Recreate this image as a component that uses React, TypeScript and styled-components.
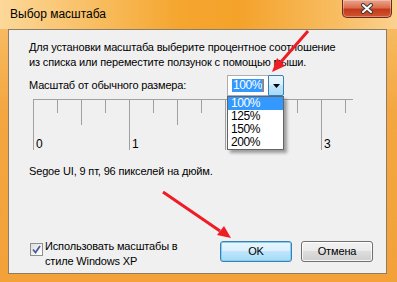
import React from "react";
import styled, { createGlobalStyle } from "styled-components";

const GlobalStyle = createGlobalStyle`
  html, body {
    margin: 0;
    padding: 0;
    background: #f4a843;
  }
  body {
    font-family: "Liberation Sans", Arial, sans-serif;
  }
`;

const Window = styled.div`
  position: relative;
  width: 397px;
  height: 282px;
  display: flex;
  flex-direction: column;
  background: linear-gradient(180deg, #f8c16c 0%, #f4a640 40%, #f3a23a 100%);
  overflow: hidden;
`;

const TitleBar = styled.div`
  height: 29px;
  flex-shrink: 0;
  display: flex;
  align-items: flex-start;
  background: linear-gradient(
    90deg,
    #fcd899 0%,
    #f9c46f 18%,
    #f5a62f 45%,
    #f4a22a 60%,
    #f8bd62 85%,
    #fbd190 100%
  );
`;

const Title = styled.span`
  margin: 7px 0 0 10px;
  font-size: 12px;
  line-height: 15px;
  color: #000;
`;

const CloseButton = styled.div`
  margin-left: auto;
  margin-right: 5px;
  width: 48px;
  height: 17px;
  border: 1px solid #6b2a1a;
  border-top: none;
  border-radius: 0 0 5px 5px;
  background: linear-gradient(180deg, #eba58e 0%, #dc6d4d 45%, #c2391c 55%, #d3552f 100%);
  box-shadow: inset 0 0 0 1px rgba(255, 255, 255, 0.3);
  display: flex;
  align-items: center;
  justify-content: center;
`;

const FrameBody = styled.div`
  flex: 1;
  display: flex;
  padding: 0 10px 8px 8px;
`;

const Client = styled.div`
  flex: 1;
  display: flex;
  flex-direction: column;
  background: #f0f0f0;
  border: 1px solid #8e7d66;
  color: #000;
  font-size: 11px;
  letter-spacing: -0.15px;
  line-height: 15px;
`;

const Intro = styled.p`
  margin: 10px 0 0;
  padding: 0 20px;
  white-space: nowrap;
`;

const ScaleRow = styled.div`
  margin-top: 5px;
  padding-left: 20px;
  height: 21px;
  display: flex;
  align-items: center;
  position: relative;
  z-index: 2;
`;

const ScaleLabel = styled.span`
  width: 198px;
`;

const Combo = styled.div`
  position: relative;
  display: flex;
  height: 21px;
  letter-spacing: -0.4px;
`;

const ComboInput = styled.div`
  width: 36px;
  height: 19px;
  border: 1px solid #abadb3;
  border-right: none;
  background: #fff;
  display: flex;
  align-items: center;
  padding-left: 4px;
`;

const Selection = styled.span`
  background: #3399ff;
  color: #fff;
  font-size: 12px;
  line-height: 13px;
  padding: 0 1px;
  display: flex;
  align-items: center;
`;

const Caret = styled.span`
  width: 1px;
  height: 13px;
  background: #e07a1a;
`;

const ComboButton = styled.div`
  width: 14px;
  height: 19px;
  border: 1px solid #3c7fb1;
  border-radius: 0 2px 2px 0;
  background: linear-gradient(180deg, #eaf6fd 0%, #d9f0fc 50%, #bee6fd 50%, #a7d9f5 100%);
  display: flex;
  align-items: center;
  justify-content: center;
`;

const DropList = styled.ul`
  position: absolute;
  top: 21px;
  left: 0;
  width: 55px;
  margin: 0;
  padding: 0;
  list-style: none;
  background: #fff;
  border: 1px solid #646464;
  box-shadow: 3px 3px 3px rgba(0, 0, 0, 0.35);
`;

const DropItem = styled.li<{ $active?: boolean }>`
  height: 13px;
  line-height: 13px;
  padding-left: 3px;
  font-size: 12px;
  background: ${(p) => (p.$active ? "#3399ff" : "transparent")};
  color: ${(p) => (p.$active ? "#fff" : "#000")};
`;

const RulerBox = styled.div`
  margin: 3px 0 0 24px;
  height: 53px;
`;

const FontInfo = styled.p`
  margin: 12px 0 0;
  padding: 0 20px;
`;

const Spacer = styled.div`
  flex: 1;
`;

const BottomRow = styled.div`
  display: flex;
  align-items: flex-start;
  padding: 0 13px 4px 21px;
`;

const CheckRow = styled.label`
  display: flex;
  align-items: flex-start;
  gap: 2px;
`;

const CheckBox = styled.span`
  margin-top: 4px;
  width: 11px;
  height: 11px;
  border: 1px solid #8e8f8f;
  background: linear-gradient(135deg, #dcdcdc 0%, #f4f4f4 60%, #ffffff 100%);
  display: flex;
  align-items: center;
  justify-content: center;
`;

const CheckText = styled.span`
  width: 140px;
`;

const Buttons = styled.div`
  margin-left: auto;
  margin-top: 2px;
  display: flex;
  gap: 9px;
`;

const Button = styled.div<{ $default?: boolean }>`
  width: 70px;
  height: 19px;
  border: 1px solid ${(p) => (p.$default ? "#3c7fb1" : "#707070")};
  border-radius: 3px;
  background: ${(p) =>
    p.$default
      ? "linear-gradient(180deg, #eaf6fd 0%, #d9f0fc 50%, #bee6fd 50%, #a7d9f5 100%)"
      : "linear-gradient(180deg, #f2f2f2 0%, #ebebeb 50%, #dddddd 50%, #cfcfcf 100%)"};
  box-shadow: inset 0 0 0 1px ${(p) => (p.$default ? "#7fd0f5" : "rgba(255,255,255,0.8)")};
  display: flex;
  align-items: center;
  justify-content: center;
  color: #000;
`;

const Overlay = styled.svg`
  position: absolute;
  left: 0;
  top: 0;
  pointer-events: none;
  z-index: 10;
`;

const TICK = "#a0a0a0";

// "2" sits under the open drop-down, so only 0, 1 and 3 are visible
const LABELS: [string, number][] = [
  ["0", 0],
  ["1", 1],
  ["3", 3],
];

const Ruler: React.FC = () => {
  const ticks = [];
  for (let i = 0; i <= 13; i++) {
    const x = i * 24 + 0.5;
    const len = i % 4 === 0 ? 51 : i % 2 === 0 ? 26 : 14;
    ticks.push(<line key={i} x1={x} y1={0} x2={x} y2={len} stroke={TICK} />);
  }
  return (
    <svg width="322" height="53">
      <line x1="0" y1="0.5" x2="320" y2="0.5" stroke={TICK} />
      {ticks}
      {LABELS.map(([t, i]) => (
        <text
          key={t}
          x={i * 96 + 3}
          y={49}
          fontSize="12"
          fontFamily='"Liberation Sans", Arial, sans-serif'
          fill="#000"
        >
          {t}
        </text>
      ))}
    </svg>
  );
};

const App: React.FC = () => {
  return (
    <>
      <GlobalStyle />
      <Window>
        <TitleBar>
          <Title>Выбор масштаба</Title>
          <CloseButton>
            <svg width="14" height="11" viewBox="0 0 14 11">
              <path d="M3 2 L11 9 M11 2 L3 9" stroke="#3a3a3a" strokeWidth="4" strokeLinecap="round" />
              <path d="M3 2 L11 9 M11 2 L3 9" stroke="#fff" strokeWidth="2" strokeLinecap="round" />
            </svg>
          </CloseButton>
        </TitleBar>
        <FrameBody>
          <Client>
            <Intro>
              Для установки масштаба выберите процентное соотношение
              <br />
              из списка или переместите ползунок с помощью мыши.
            </Intro>
            <ScaleRow>
              <ScaleLabel>Масштаб от обычного размера:</ScaleLabel>
              <Combo>
                <ComboInput>
                  <Selection>
                    100%
                    <Caret />
                  </Selection>
                </ComboInput>
                <ComboButton>
                  <svg width="7" height="4" viewBox="0 0 7 4">
                    <path d="M0 0 H7 L3.5 4 Z" fill="#000" />
                  </svg>
                </ComboButton>
                <DropList>
                  <DropItem $active>100%</DropItem>
                  <DropItem>125%</DropItem>
                  <DropItem>150%</DropItem>
                  <DropItem>200%</DropItem>
                </DropList>
              </Combo>
            </ScaleRow>
            <RulerBox>
              <Ruler />
            </RulerBox>
            <FontInfo>Segoe UI, 9 пт, 96 пикселей на дюйм.</FontInfo>
            <Spacer />
            <BottomRow>
              <CheckRow>
                <CheckBox>
                  <svg width="9" height="9" viewBox="0 0 9 9">
                    <path d="M1 4.5 L3.5 7.5 L8 1" stroke="#4a5f97" strokeWidth="1.8" fill="none" />
                  </svg>
                </CheckBox>
                <CheckText>Использовать масштабы в стиле Windows XP</CheckText>
              </CheckRow>
              <Buttons>
                <Button $default>OK</Button>
                <Button>Отмена</Button>
              </Buttons>
            </BottomRow>
          </Client>
        </FrameBody>
        <Overlay width="397" height="282">
          <line x1="308" y1="31" x2="280" y2="63" stroke="#ee1c24" strokeWidth="3" />
          <polygon points="272,72 285,66 277,58" fill="#ee1c24" />
          <line x1="163" y1="192" x2="220" y2="231" stroke="#ee1c24" strokeWidth="3" />
          <polygon points="231,238 217,235 224,226" fill="#ee1c24" />
        </Overlay>
      </Window>
    </>
  );
};

export default App;
